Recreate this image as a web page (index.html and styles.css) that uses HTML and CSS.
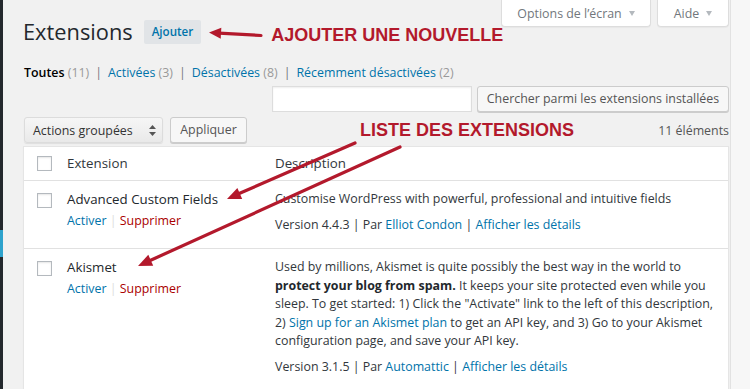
FILE: index.html
```html
<!DOCTYPE html>
<html lang="fr">
<head>
<meta charset="utf-8">
<title>Extensions</title>
<link rel="stylesheet" href="styles.css">
</head>
<body>
<div class="page">
  <div class="menu-edge"><div class="menu-current"></div></div>
  <div class="wrap">
    <div class="screen-meta">
      <button class="meta-btn meta-options">Options de l’écran <span class="caret"></span></button>
      <button class="meta-btn meta-help">Aide <span class="caret"></span></button>
    </div>
    <div class="title-row">
      <h1>Extensions</h1>
      <a class="add-new">Ajouter</a>
      <span class="note note-add">AJOUTER UNE NOUVELLE</span>
    </div>
    <ul class="subsubsub">
      <li class="current">Toutes <span class="count">(11)</span></li>
      <li class="sep">|</li>
      <li><a>Activées</a> <span class="count">(3)</span></li>
      <li class="sep">|</li>
      <li><a>Désactivées</a> <span class="count">(8)</span></li>
      <li class="sep">|</li>
      <li><a>Récemment désactivées</a> <span class="count">(2)</span></li>
    </ul>
    <div class="search-row">
      <input class="search-input" type="text">
      <button class="btn btn-search">Chercher parmi les extensions installées</button>
    </div>
    <div class="tablenav">
      <div class="select">Actions groupées
        <svg class="updown" width="7" height="11" viewBox="0 0 7 11"><path d="M3.5 0 L7 4 H0 Z M0 7 H7 L3.5 11 Z" fill="#555"/></svg>
      </div>
      <button class="btn btn-apply">Appliquer</button>
      <span class="note note-list">LISTE DES EXTENSIONS</span>
      <span class="items">11 éléments</span>
    </div>
    <div class="plugins">
      <div class="row head">
        <div class="cell check"><span class="box"></span></div>
        <div class="cell col-title">Extension</div>
        <div class="cell col-desc">Description</div>
      </div>
      <div class="row">
        <div class="cell check"><span class="box"></span></div>
        <div class="cell col-title">
          <div class="plugin-name">Advanced Custom Fields</div>
          <div class="row-actions"><a class="activate">Activer</a> <span class="bar">|</span> <a class="delete">Supprimer</a></div>
        </div>
        <div class="cell col-desc">
          <p class="desc">Customise WordPress with powerful, professional and intuitive fields</p>
          <p class="meta">Version 4.4.3 | Par <a>Elliot Condon</a> | <a>Afficher les détails</a></p>
        </div>
      </div>
      <div class="row">
        <div class="cell check"><span class="box"></span></div>
        <div class="cell col-title">
          <div class="plugin-name">Akismet</div>
          <div class="row-actions"><a class="activate">Activer</a> <span class="bar">|</span> <a class="delete">Supprimer</a></div>
        </div>
        <div class="cell col-desc">
          <p class="desc">Used by millions, Akismet is quite possibly the best way in the world to <strong>protect your blog from spam.</strong> It keeps your site protected even while you sleep. To get started: 1) Click the "Activate" link to the left of this description, 2) <a>Sign up for an Akismet plan</a> to get an API key, and 3) Go to your Akismet configuration page, and save your API key.</p>
          <p class="meta">Version 3.1.5 | Par <a>Automattic</a> | <a>Afficher les détails</a></p>
        </div>
      </div>
    </div>
  </div>
  <div class="gutter"></div>
  <svg class="arrows" width="750" height="389" viewBox="0 0 750 389">
    <g stroke="#b3192c" stroke-width="3.2" stroke-linecap="round" fill="#b3192c">
      <line x1="219" y1="33.1" x2="261" y2="35.5"/>
      <polygon stroke="none" points="209,32.5 220.7,38.7 221.3,27.7"/>
      <line x1="238" y1="194" x2="355" y2="143"/>
      <polygon stroke="none" points="227,199 242.2,198.9 237.4,187.9"/>
      <line x1="149" y1="261" x2="400" y2="147"/>
      <polygon stroke="none" points="138,266 153.2,265.7 148.3,254.7"/>
    </g>
  </svg>
</div>
</body>
</html>
```
FILE: styles.css
```css
* { box-sizing: border-box; }
html, body { margin: 0; padding: 0; }
body { background: #f1f1f1; }

.page {
  position: relative;
  display: flex;
  height: 389px;
  overflow: hidden;
  background: #f1f1f1;
  font-family: "Open Sans", "Noto Sans", sans-serif;
  font-size: 12.4px;
  color: #444;
}

.menu-edge { flex: none; width: 3px; background: #23282d; }
.menu-current { margin-top: 230px; height: 27px; background: #2ea2cc; }

.wrap { flex: 1; min-width: 0; margin-left: 20px; margin-right: 1px; }

.gutter { flex: none; width: 20px; background: #f7f7f7; border-left: 1px solid #e2e2e2; }

/* screen meta */
.screen-meta { display: flex; justify-content: flex-end; gap: 6px; height: 27px; }
.meta-btn {
  display: flex; align-items: center; justify-content: center; gap: 7px;
  height: 27px; padding: 0;
  background: #fff; border: 1px solid #ddd; border-top: 0;
  border-radius: 0 0 4px 4px;
  box-shadow: 0 1px 1px rgba(0,0,0,.04);
  color: #72777c; font: 12.4px "Open Sans", sans-serif;
}
.meta-options { width: 150px; }
.meta-help { width: 72px; }
.caret { width: 0; height: 0; border-left: 3.5px solid transparent; border-right: 3.5px solid transparent; border-top: 5px solid #b4b9be; }

/* title */
.title-row { display: flex; align-items: center; height: 24px; margin-top: -7px; }
h1 { margin: 0; font-size: 21.8px; font-weight: 400; line-height: 24px; color: #23282d; }
.add-new {
  margin-left: 11px; height: 24px; padding: 0 8px;
  background: #e1e4e7; border-radius: 2px;
  color: #0073aa; font-size: 11.6px; font-weight: 600; line-height: 24px;
}
.note { color: #b3192c; font-family: "Liberation Sans", Arial, sans-serif; font-weight: 700; font-size: 18px; white-space: nowrap; }
.note-add { margin-left: 70px; margin-top: 6px; }

/* filters */
.subsubsub { display: flex; list-style: none; margin: 20px 0 0 1px; padding: 0; line-height: 18px; color: #666; white-space: pre; }
.subsubsub li { margin: 0; }
.subsubsub .sep { margin: 0 6px; color: #72777c; }
.subsubsub .current { color: #000; font-weight: 600; }
.subsubsub .current .count { font-weight: 400; }
.subsubsub a { color: #0073aa; }
.count { color: #999; }

/* search */
.search-row { display: flex; justify-content: flex-end; gap: 5px; margin-top: 4px; height: 26px; }
.search-input { width: 200px; height: 26px; margin: 0; background: #fff; border: 1px solid #ddd; box-shadow: inset 0 1px 2px rgba(0,0,0,.07); }
.btn {
  height: 26px; margin: 0; padding: 0 8px;
  background: #f7f7f7; border: 1px solid #ccc; border-radius: 3px;
  box-shadow: 0 1px 0 #ccc;
  color: #555; font: 12.4px/24px "Open Sans", sans-serif; white-space: nowrap;
}
.btn-search { width: 252px; }

/* tablenav */
.tablenav { display: flex; align-items: center; height: 26px; margin-top: 5px; }
.select {
  display: flex; align-items: center; justify-content: space-between;
  width: 139px; height: 26px; margin-left: 1px; padding: 0 6px 0 8px;
  background: linear-gradient(#f6f6f6, #e9e9e9);
  border: 1px solid #dcdcdc; border-radius: 3px;
  box-shadow: 0 1px 1px rgba(0,0,0,.08);
  color: #333;
}
.btn-apply { margin-left: 7px; width: 77px; }
.note-list { margin-left: 113px; }
.items { margin-left: auto; color: #555; }

/* table */
.plugins { margin-top: 3px; background: #fff; border: 1px solid #e5e5e5; box-shadow: 0 1px 1px rgba(0,0,0,.04); }
.row { display: grid; grid-template-columns: 43px 208px 1fr; border-bottom: 1px solid #e1e1e1; }
.cell { padding-top: 9px; }
.check { padding-left: 13px; padding-top: 12px; }
.box { display: block; width: 15px; height: 15px; border: 1px solid #b4b9be; background: #fff; box-shadow: inset 0 1px 2px rgba(0,0,0,.1); }
.head .cell { padding-top: 7px; padding-bottom: 7px; font-size: 13.3px; line-height: 19px; color: #32373c; }
.head .check { padding-top: 9px; }
.plugin-name { font-size: 13.3px; line-height: 18.5px; color: #23282d; }
.row-actions { margin-top: 3px; line-height: 18.5px; }
.row-actions .activate { color: #0073aa; }
.row-actions .bar { color: #ddd; }
.row-actions .delete { color: #a00; }
.col-desc { padding-right: 14px; padding-bottom: 14px; color: #32373c; }
.head .col-desc { padding-bottom: 7px; }
.desc, .meta { margin: 0; line-height: 18.5px; }
.meta { margin-top: 7px; }
.col-desc a { color: #0073aa; }
.desc strong { font-weight: 700; color: #23282d; }

.arrows { position: absolute; left: 0; top: 0; pointer-events: none; }
```
